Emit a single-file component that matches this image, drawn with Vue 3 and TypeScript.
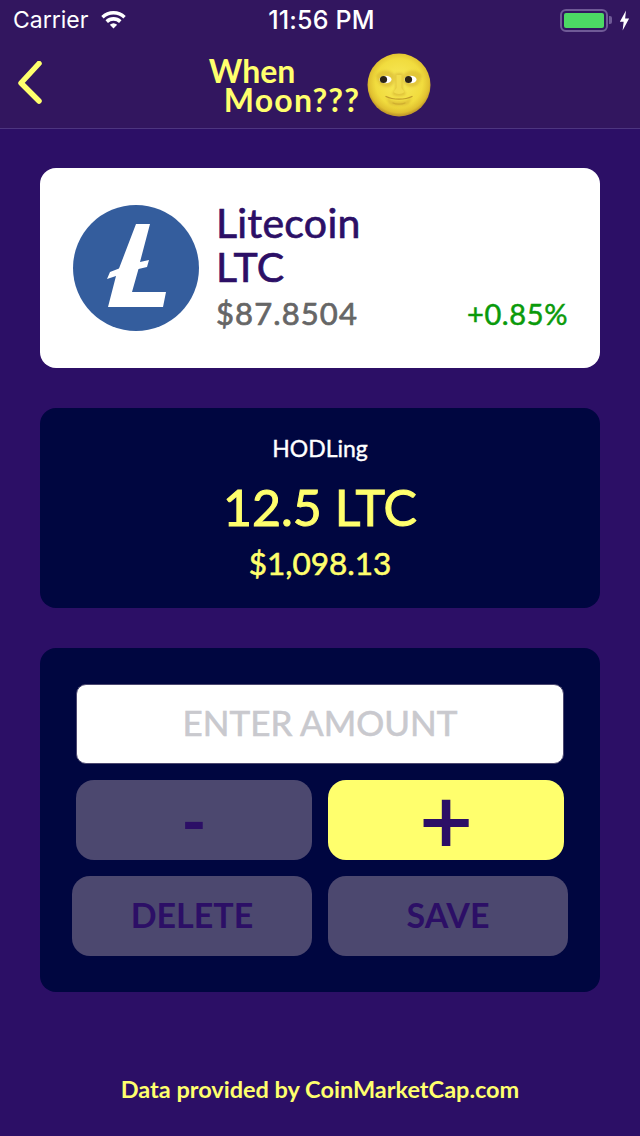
<script setup lang="ts">
import { ref } from 'vue'

const amount = ref('')
const coin = { name: 'Litecoin', symbol: 'LTC', price: '$87.8504', change: '+0.85%' }
</script>

<template>
  <div class="screen">
    <header class="top">
      <div class="status">
        <div class="status-left">
          <span>Carrier</span>
          <svg class="wifi" width="29" height="20" viewBox="0 0 24 18">
            <path d="M1 6.2A15.8 15.8 0 0 1 23 6.2L20.9 8.5A12.7 12.7 0 0 0 3.1 8.5Z" fill="#fff" />
            <path d="M4.8 10.2A10.4 10.4 0 0 1 19.2 10.2L17 12.5A7.2 7.2 0 0 0 7 12.5Z" fill="#fff" />
            <path d="M8.7 14.2A5 5 0 0 1 15.3 14.2L12 17.6Z" fill="#fff" />
          </svg>
        </div>
        <span class="clock">11:56 PM</span>
        <div class="status-right">
          <div class="battery"><div class="battery-fill"></div></div>
          <div class="battery-cap"></div>
          <svg class="bolt" width="11" height="21" viewBox="0 0 10 20">
            <path d="M6.4 0.5L0.6 11.2H4.2L3.2 19.5L9.4 8H5.6Z" fill="#fff" />
          </svg>
        </div>
      </div>
      <div class="nav">
        <svg class="back" width="28" height="44" viewBox="0 0 28 44">
          <path d="M23 3.500L5 23L23 41" transform="translate(0 -1)" fill="none" stroke="#ffff6d" stroke-width="5.500" stroke-linecap="round" stroke-linejoin="round" />
        </svg>
        <div class="brand">
          <div class="brand-text">
            <div>When</div>
            <div class="brand-second">Moon???</div>
          </div>
          <svg class="moon" width="64" height="64" viewBox="0 0 64 64">
            <defs>
              <radialGradient id="moonFill" cx="50%" cy="46%" r="52%">
                <stop offset="0%" stop-color="#f8ea5c" />
                <stop offset="72%" stop-color="#f1dc3e" />
                <stop offset="92%" stop-color="#e0c030" />
                <stop offset="100%" stop-color="#c49c2a" />
              </radialGradient>
              <filter id="soft" x="-30%" y="-30%" width="160%" height="160%">
                <feGaussianBlur stdDeviation="1" />
              </filter>
            </defs>
            <circle cx="32" cy="32" r="31.500" fill="url(#moonFill)" />
            <g filter="url(#soft)" fill="#d5b330">
              <path d="M9 22C14 16 23 16 28 22C28 30 26 34 20 34C14 34 10 30 9 22Z" opacity="0.55" />
              <path d="M36 22C41 16 50 16 55 22C54 30 50 34 44 34C38 34 36 30 36 22Z" opacity="0.55" />
              <path d="M28.500 20H35.500L36 36L39 41C35 44 29 44 25 41L28 36Z" opacity="0.65" />
              <path d="M19 44C25 50 39 50 45 44L42 51C37 54 27 54 22 51Z" opacity="0.6" />
            </g>
            <path d="M29.500 22V35L26.500 39C29 41.500 35 41.500 37.500 39L34.500 35V22Z" fill="#f1dc4d" />
            <ellipse cx="18.500" cy="26.500" rx="6" ry="3.800" fill="#fff" />
            <ellipse cx="43.500" cy="26.500" rx="6" ry="3.800" fill="#fff" />
            <circle cx="16.500" cy="26.500" r="3.600" fill="#2c2415" />
            <circle cx="41.500" cy="26.500" r="3.600" fill="#2c2415" />
            <path d="M19 43.500C26 47 38 47 45 43.500" fill="none" stroke="#c09c2a" stroke-width="1.300" stroke-linecap="round" />
            <path d="M26 50C29 51.500 35 51.500 38 50" fill="none" stroke="#cfae2f" stroke-width="1.200" stroke-linecap="round" />
          </svg>
        </div>
      </div>
    </header>

    <main class="content">
      <section class="card coin-card">
        <svg class="coin-logo" width="126" height="126" viewBox="0 0 126 126">
          <circle cx="63" cy="63" r="63" fill="#345d9d" />
          <path d="M63 19H77L67 57L76 55L74 62L65.500 64L59 87H93L90 102H35L43 71L34 74L37 67L46 63.500Z" fill="#fff" />
        </svg>
        <div class="coin-info">
          <div class="coin-name">{{ coin.name }}</div>
          <div class="coin-name">{{ coin.symbol }}</div>
          <div class="coin-bottom">
            <span class="coin-price">{{ coin.price }}</span>
            <span class="coin-change">{{ coin.change }}</span>
          </div>
        </div>
      </section>

      <section class="card hodl-card">
        <div class="hodl-label">HODLing</div>
        <div class="hodl-amount">12.5 LTC</div>
        <div class="hodl-value">$1,098.13</div>
      </section>

      <section class="card form-card">
        <input v-model="amount" class="amount" placeholder="ENTER AMOUNT" />
        <div class="row row-inner">
          <button class="btn btn-sign">-</button>
          <button class="btn btn-sign btn-on">+</button>
        </div>
        <div class="row">
          <button class="btn">DELETE</button>
          <button class="btn">SAVE</button>
        </div>
      </section>
    </main>

    <footer class="credit">Data provided by CoinMarketCap.com</footer>
  </div>
</template>

<style>
body {
  background: #2c0f66;
}
</style>

<style scoped>
.screen {
  width: 640px;
  height: 1136px;
  display: flex;
  flex-direction: column;
  background: #2c0f66;
  font-family: Lato, 'Open Sans', sans-serif;
  overflow: hidden;
}

.top {
  height: 129px;
  box-sizing: border-box;
  background: #32165f;
  border-bottom: 1px solid #4d3580;
}

.status {
  height: 40px;
  display: grid;
  grid-template-columns: 1fr auto 1fr;
  align-items: center;
  padding: 0 10px 0 13px;
  color: #fff;
  font-family: Inter, Roboto, sans-serif;
  font-size: 23px;
}

.status-left {
  display: flex;
  align-items: center;
  gap: 11px;
}

.wifi {
  margin-top: -2px;
}

.clock {
  font-weight: 500;
  font-size: 25px;
  letter-spacing: 0.2px;
}

.status-right {
  display: flex;
  align-items: center;
  justify-content: flex-end;
}

.battery {
  width: 48px;
  height: 23px;
  box-sizing: border-box;
  border: 2px solid #6f5a96;
  border-radius: 6px;
  padding: 2px;
}

.battery-fill {
  height: 100%;
  background: #4cd964;
  border-radius: 2px;
}

.battery-cap {
  width: 3px;
  height: 8px;
  margin-left: 1px;
  background: #6f5a96;
  border-radius: 0 2px 2px 0;
}

.bolt {
  margin-left: 7px;
}

.nav {
  position: relative;
  height: 88px;
  display: flex;
  justify-content: center;
}

.back {
  position: absolute;
  left: 16px;
  top: 21px;
}

.brand {
  display: flex;
  align-items: center;
}

.brand-text {
  color: #ffff6d;
  font-size: 32px;
  font-weight: 700;
  line-height: 29px;
  margin-top: 2px;
}

.brand-second {
  padding-left: 15px;
  letter-spacing: 1.2px;
}

.moon {
  margin-left: 7px;
  margin-top: 1px;
}

.content {
  display: flex;
  flex-direction: column;
  gap: 40px;
  padding: 39px 40px 0;
}

.card {
  border-radius: 16px;
  box-sizing: border-box;
}

.coin-card {
  height: 200px;
  background: #fff;
  display: flex;
  align-items: center;
  gap: 17px;
  padding: 0 32px 0 33px;
}

.coin-info {
  flex: 1;
  margin-top: -3px;
}

.coin-name {
  color: #2c0f66;
  font-size: 41px;
  font-weight: 400;
  line-height: 44px;
  letter-spacing: 0.3px;
  -webkit-text-stroke: 0.7px #2c0f66;
}

.coin-bottom {
  display: flex;
  justify-content: space-between;
  align-items: baseline;
  margin-top: 5px;
}

.coin-price {
  color: #666;
  font-size: 31px;
  letter-spacing: 1.1px;
  -webkit-text-stroke: 0.7px #666;
}

.coin-change {
  color: #0a9a0a;
  font-size: 29px;
  letter-spacing: 0.6px;
  -webkit-text-stroke: 0.5px #0a9a0a;
}

.hodl-card {
  height: 200px;
  background: #000640;
  display: flex;
  flex-direction: column;
  align-items: center;
  padding-top: 26px;
}

.hodl-label {
  color: #fff;
  font-size: 23px;
  line-height: 28px;
  -webkit-text-stroke: 0.4px #fff;
}

.hodl-amount {
  color: #ffff6d;
  font-size: 50px;
  line-height: 58px;
  margin-top: 16px;
  -webkit-text-stroke: 1px #ffff6d;
}

.hodl-value {
  color: #ffff6d;
  font-size: 31.500px;
  line-height: 36px;
  margin-top: 9px;
  -webkit-text-stroke: 0.6px #ffff6d;
}

.form-card {
  height: 344px;
  background: #000640;
  display: flex;
  flex-direction: column;
  gap: 16px;
  padding: 36px 32px 0;
}

.amount {
  height: 80px;
  margin: 0 4px;
  padding: 0 0 4px;
  box-sizing: border-box;
  border: 1px solid #4c4870;
  border-radius: 10px;
  background: #fff;
  text-align: center;
  font-family: inherit;
  font-size: 35px;
  font-weight: 400;
  -webkit-text-stroke: 0.6px #c9c9ce;
  outline: none;
}

.amount::placeholder {
  color: #c9c9ce;
  opacity: 1;
}

.row {
  display: flex;
  gap: 16px;
}

.row-inner {
  padding: 0 4px;
}

.btn {
  flex: 1;
  height: 80px;
  border: none;
  border-radius: 18px;
  background: #4c486f;
  color: #2c0f66;
  font-family: inherit;
  font-size: 34px;
  font-weight: 700;
  padding: 0 0 4px;
}

.btn-sign {
  font-size: 68px;
  line-height: 1;
  padding: 0;
}

.btn-on {
  background: #ffff6d;
  font-size: 90px;
  line-height: 76px;
  font-weight: 400;
  -webkit-text-stroke: 2px #2c0f66;
  padding-bottom: 4px;
}

.credit {
  margin-top: 82px;
  text-align: center;
  color: #ffff6d;
  font-size: 23.500px;
  font-weight: 700;
  line-height: 30px;
}
</style>
